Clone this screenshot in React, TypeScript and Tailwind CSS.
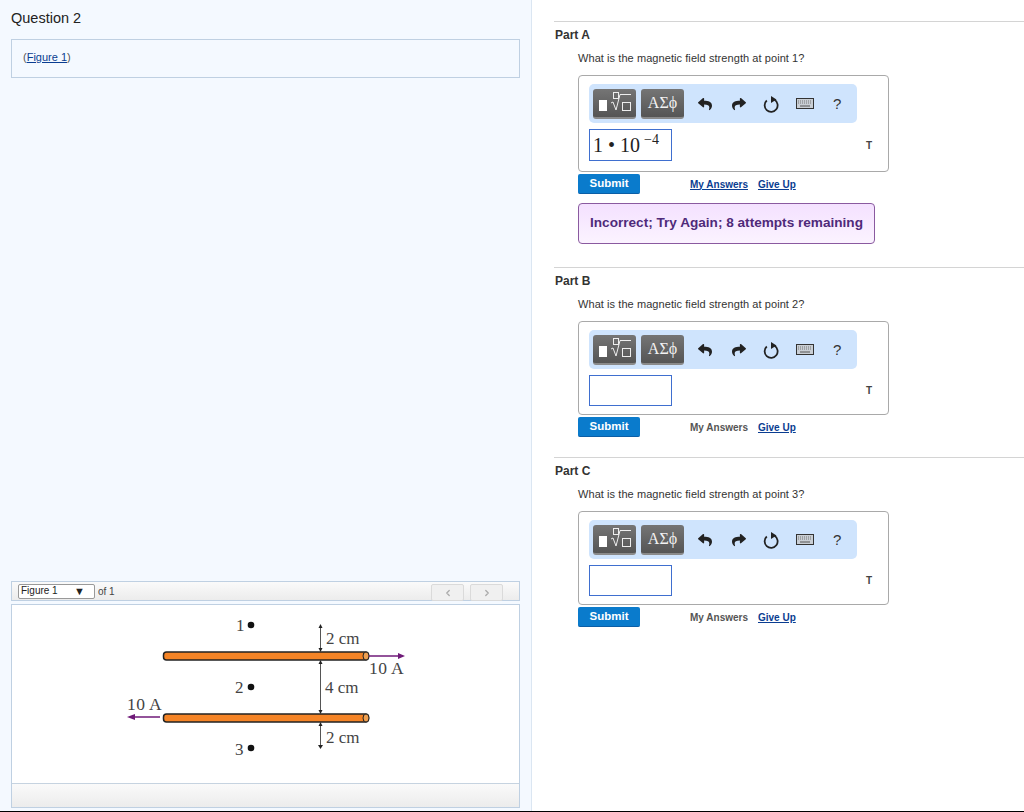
import { ChevronLeft, ChevronRight } from 'lucide-react';
import { FaReply, FaShare } from 'react-icons/fa';

function TemplateIcon() {
  return (
    <svg width="43" height="30" viewBox="0 0 43 30">
      <rect x="6" y="11" width="8" height="11" fill="#fff" />
      <g fill="none" stroke="#eeeeee" strokeWidth="1">
        <rect x="20.5" y="3.5" width="5" height="6" />
        <path d="M18 14l2-1 3 8 4-15.5h11" />
        <rect x="29.5" y="13.5" width="8" height="8" />
      </g>
    </svg>
  );
}

function RedoCircle() {
  return (
    <svg width="17" height="18" viewBox="0 0 17 18">
      <path d="M11.5 4.8A6.5 6.5 0 1 1 3.8 5.5" fill="none" stroke="#222" strokeWidth="1.8" />
      <path d="M8 1l5.5 3.6L8 8z" fill="#222" />
    </svg>
  );
}

function KeyboardIcon() {
  return (
    <svg width="18" height="11" viewBox="0 0 18 11">
      <rect x="0.5" y="0.5" width="17" height="10" fill="#c9ced4" stroke="#333" />
      <path d="M2 3h14M2 5h14" stroke="#777" strokeWidth="1" strokeDasharray="1 1" />
      <path d="M4 8h10" stroke="#555" strokeWidth="1" />
    </svg>
  );
}

function MathToolbar() {
  return (
    <div className="flex h-[39px] w-[268px] items-center rounded-[5px] bg-[#cfe4fd] pl-[4px]">
      <div className="h-[30px] w-[43px] rounded-[3px] border-b-2 border-[#8a8a8a] bg-gradient-to-b from-[#757575] to-[#555555]">
        <TemplateIcon />
      </div>
      <div className="ml-[5px] flex h-[30px] w-[43px] items-center justify-center rounded-[3px] border-b-2 border-[#8a8a8a] bg-gradient-to-b from-[#757575] to-[#555555] font-['Liberation_Serif',serif] text-[16px] text-[#f2f2f2]">
        ΑΣϕ
      </div>
      <FaReply className="ml-[14px] h-[14px] w-[14px] text-[#222]" />
      <FaShare className="ml-[20px] h-[14px] w-[14px] text-[#222]" />
      <div className="ml-[17px] flex w-[17px] justify-center"><RedoCircle /></div>
      <div className="ml-[16px] flex w-[18px] justify-center"><KeyboardIcon /></div>
      <span className="ml-[19px] text-[15px] leading-none text-[#333]">?</span>
    </div>
  );
}

type PartProps = {
  name: string;
  point: number;
  answered?: boolean;
};

function Part({ name, point, answered }: PartProps) {
  return (
    <section className="border-t border-[#d4d4d4] pl-[1px]">
      <h2 className="mt-[6px] text-[12px] font-bold leading-[14px] text-[#333]">{name}</h2>
      <p className="ml-[23px] mt-[9px] text-[11px] leading-[14px] tracking-[0.07px] text-[#333]">
        What is the magnetic field strength at point {point}?
      </p>
      <div className={`ml-[23px] mt-[10px] w-[311px] rounded-[4px] border border-[#a9a9a9] bg-white px-[10px] pt-[8px] ${answered ? 'h-[97px]' : 'h-[94px]'}`}>
        <MathToolbar />
        <div className="mt-[6px] flex items-center">
          {answered ? (
            <div className="flex h-[32px] w-[83px] items-start border border-[#3f6fcf] pl-[3px] pt-[3px] font-['Liberation_Serif',serif] text-[20px] leading-[24px] text-[#222]">
              1 • 10
              <span className="ml-[4px] -mt-[5px] text-[14px]">−4</span>
            </div>
          ) : (
            <div className="h-[31px] w-[83px] border border-[#3f6fcf]" />
          )}
          <span className="ml-[194px] text-[10px] font-bold text-[#444]">T</span>
        </div>
      </div>
      <div className="ml-[23px] mt-[2px] flex h-[20px] items-center">
        <button className="h-[20px] w-[62px] rounded-[2px] border-b border-[#0b5ea6] bg-[#0a7bcc] text-[11.5px] font-bold text-white">
          Submit
        </button>
        <span className={`ml-[50px] text-[10px] font-bold ${answered ? 'text-[#0a3d91] underline' : 'text-[#555]'}`}>My Answers</span>
        <span className="ml-[10px] text-[10px] font-bold text-[#0a3d91] underline">Give Up</span>
      </div>
      {answered && (
        <div className="ml-[23px] mt-[9px] flex h-[41px] w-[297px] items-center rounded-[4px] border border-[#8a5aa0] bg-gradient-to-b from-[#f4e1ff] to-[#fbf3ff] pl-[11px] text-[13.6px] font-bold text-[#4f2a7a]">
          Incorrect; Try Again; 8 attempts remaining
        </div>
      )}
    </section>
  );
}

function WireDiagram() {
  const serif = "'Liberation Serif', serif";
  return (
    <svg className="block h-[178px] w-[507px]" viewBox="12 605 507 178" fontFamily={serif} fill="#444">
      <g stroke="#222" strokeWidth="1.5">
        <rect x="163.5" y="652" width="205" height="8" rx="3" fill="#f58426" />
        <rect x="163.5" y="714" width="205" height="8" rx="3" fill="#f58426" />
        <ellipse cx="366" cy="656" rx="3" ry="4" fill="#f0a050" strokeWidth="1" />
        <ellipse cx="366" cy="718" rx="3" ry="4" fill="#f0a050" strokeWidth="1" />
      </g>
      <circle cx="251" cy="625" r="3.3" fill="#111" />
      <circle cx="251" cy="687" r="3.3" fill="#111" />
      <circle cx="251" cy="748" r="3.3" fill="#111" />
      <text x="236" y="631" fontSize="17">1</text>
      <text x="235" y="693" fontSize="17">2</text>
      <text x="235" y="755" fontSize="17">3</text>

      <g stroke="#555" strokeWidth="1">
        <path d="M320.5 627v23M320.5 663v48M320.5 724v22" />
      </g>
      <g fill="#222">
        <path d="M320.5 624l-2 4h4zM320.5 652l-2-4h4zM320.5 660l-2 4h4zM320.5 714l-2-4h4zM320.5 722l-2 4h4zM320.5 749l-2.5-4h5z" />
      </g>
      <text x="326" y="644" fontSize="17">2 cm</text>
      <text x="325" y="693" fontSize="17">4 cm</text>
      <text x="326" y="743" fontSize="17">2 cm</text>

      <path d="M369 656h31" stroke="#6f1a78" strokeWidth="1.5" />
      <path d="M405 656l-7-3v6z" fill="#6f1a78" />
      <text x="369" y="674" fontSize="17.5" letterSpacing="0.4">10 A</text>
      <path d="M131 717h29" stroke="#6f1a78" strokeWidth="1.5" />
      <path d="M127 717l8-3v6z" fill="#6f1a78" />
      <text x="127" y="710" fontSize="17.5" letterSpacing="0.4">10 A</text>
    </svg>
  );
}

export default function App() {
  return (
    <div className="flex h-[812px] w-[1024px] overflow-hidden border-b border-black bg-white font-['Liberation_Sans',Arial,sans-serif]">
      <aside className="flex h-full w-[532px] shrink-0 flex-col border-r border-[#dbe6f2] bg-[#f4f9ff] pl-[11px]">
        <h1 className="mt-[9px] text-[14.5px] leading-[18px] text-[#222]">Question 2</h1>
        <div className="mt-[12px] h-[39px] w-[509px] border border-[#bfd0e2] pl-[11px] pt-[10px] text-[11px] leading-[14px] text-[#555]">
          (<a className="text-[#0a3d91] underline">Figure 1</a>)
        </div>
        <div className="mt-[503px] flex h-[20px] w-[509px] items-center border border-[#bfd0e2] bg-gradient-to-b from-[#fafafa] to-[#ececec] pl-[6px]">
          <div className="flex h-[15px] w-[77px] items-center justify-between rounded-[2px] border border-[#999] bg-white pl-[2px] pr-[9px] text-[10px] leading-none text-[#222]">
            Figure 1
            <span className="text-[11px] leading-none">▼</span>
          </div>
          <span className="ml-[3px] text-[10px] text-[#444]">of 1</span>
          <div className="ml-auto mr-[16px] flex gap-[6px]">
            <div className="mt-[3px] flex h-[17px] w-[33px] items-center justify-center rounded-[2px] border border-[#dadada] bg-[#f0f0f0]">
              <ChevronLeft className="h-[10px] w-[10px] text-[#aaa]" strokeWidth={3} />
            </div>
            <div className="mt-[3px] flex h-[17px] w-[33px] items-center justify-center rounded-[2px] border border-[#dadada] bg-[#f0f0f0]">
              <ChevronRight className="h-[10px] w-[10px] text-[#aaa]" strokeWidth={3} />
            </div>
          </div>
        </div>
        <div className="mt-[3px] w-[509px] border border-[#bfd0e2] bg-white">
          <WireDiagram />
          <div className="h-[24px] border-t border-[#c6d3e0] bg-gradient-to-b from-[#fafafa] to-[#ececec]" />
        </div>
      </aside>
      <main className="min-w-0 flex-1 pl-[22px] pt-[21px]">
        <div className="h-[246px]"><Part name="Part A" point={1} answered /></div>
        <div className="h-[190px]"><Part name="Part B" point={2} /></div>
        <Part name="Part C" point={3} />
      </main>
    </div>
  );
}
